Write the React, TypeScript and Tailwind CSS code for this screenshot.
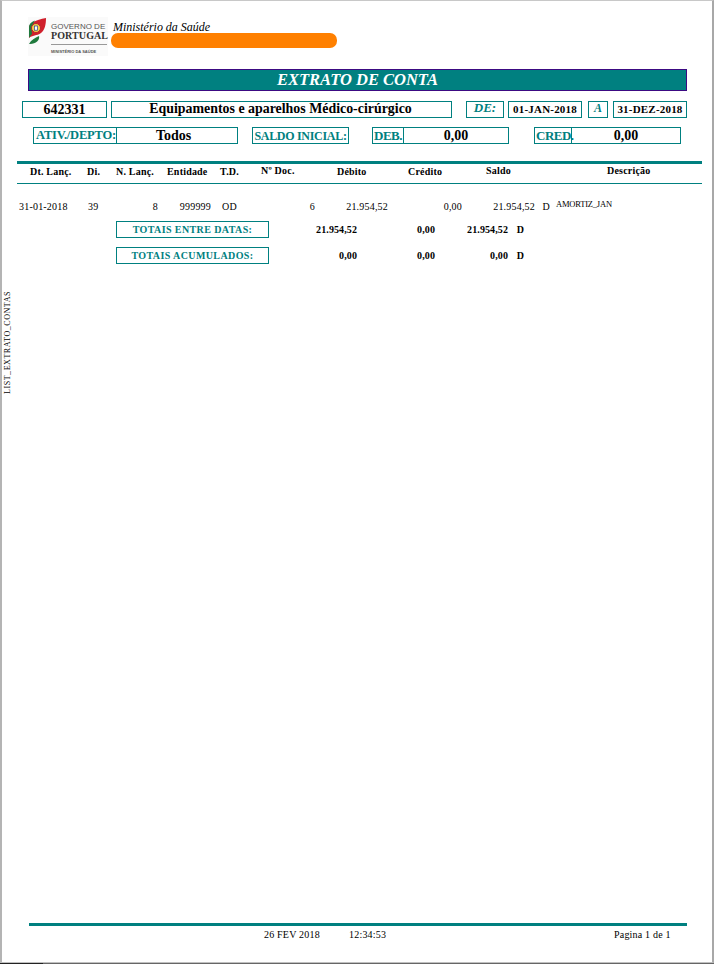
const serif = "font-['Liberation_Serif','Times_New_Roman',serif]";

const teal = "border border-[#008080]";

// row of a table: every cell has a fixed column box
const Cell = ({ w, right, center, className, children }: { w: number; right?: boolean; center?: boolean; className?: string; children?: React.ReactNode }) => (
  <div
    style={{ width: w }}
    className={`shrink-0 whitespace-nowrap ${right ? "text-right" : center ? "text-center" : "text-left"} ${className ?? ""}`}
  >
    {children}
  </div>
);

const Logo = () => (
  <div className="flex w-[80px] h-[39px] bg-[#fafafa]">
    <svg width="19" height="27" viewBox="0 0 19 27" className="shrink-0 mt-[1px]">
      <path d="M1 9 C2 5 7 2 18 0 C18 6 17 12 13 15 C9 18 4 17 1 20 Z" fill="#d0202c" />
      <path d="M1 9 C1 6 3 4 7 2.5 C4 6 3 11 4 16 C3 17 2 18 1 20 Z" fill="#1f7a3d" />
      <path d="M1 26 C3 22 7 20 11 18 C12 22 8 26 2 26 Z" fill="#1f7a3d" />
      <circle cx="8" cy="10" r="4.5" fill="#f4d24a" stroke="#b8202c" strokeWidth="1" />
      <rect x="6.4" y="8" width="3.2" height="4.2" fill="#ffffff" stroke="#23408f" strokeWidth="0.7" />
    </svg>
    <div className="ml-[4px] pt-[6px] font-['Liberation_Sans',sans-serif] text-[#555]">
      <div className="text-[8px] leading-[8px] whitespace-nowrap">GOVERNO DE</div>
      <div className="text-[10px] leading-[10px] font-bold tracking-[0.1px] font-['Liberation_Serif',serif] text-[#333] whitespace-nowrap">PORTUGAL</div>
      <div className="h-[1px] bg-[#999] mt-[3px] w-[56px]" />
      <div className="text-[4px] leading-[4px] mt-[5px] font-bold text-[#555] whitespace-nowrap">MINISTÉRIO DA SAÚDE</div>
    </div>
  </div>
);

const Box = ({ w, h, className, children }: { w: number; h: number; className?: string; children?: React.ReactNode }) => (
  <div style={{ width: w, height: h }} className={`${teal} shrink-0 flex items-center justify-center whitespace-nowrap ${className ?? ""}`}>
    {children}
  </div>
);

const columns = ["Dt. Lanç.", "Di.", "N. Lanç.", "Entidade", "T.D."];

export default function App() {
  return (
    <div className={`${serif} w-[714px] h-[964px] bg-white text-black overflow-hidden flex flex-col`}>
      <div className="relative flex-1 border-t border-t-[#c8c8c8] border-l-2 border-l-[#b4b4b4] border-r-2 border-r-[#a8a8a8] border-b border-b-[#c0c0c0]">
        {/* cabeçalho */}
        <div className="flex pt-[16px] pl-[26px]">
          <Logo />
          <div className="ml-[5px]">
            <div className="italic text-[13.3px] leading-[15px] mt-[2px] scale-x-90 origin-left whitespace-nowrap">Ministério da Saúde</div>
            <div className="w-[226px] h-[15px] rounded-[7px] bg-[#ff8000] -ml-[2px] mt-[-1px]" />
          </div>
        </div>

        <div className="ml-[26px] mt-[13px] w-[659px] h-[22px] bg-[#008080] border border-[#3c0a82] flex items-center justify-center text-white italic font-bold text-[16.5px] leading-none">
          EXTRATO DE CONTA
        </div>

        <div className="flex ml-[20px] mt-[10px] items-start">
          <Box w={85} h={17} className="font-bold text-[14px]">642331</Box>
          <Box w={341} h={17} className="ml-[4px] font-bold text-[13.9px] pr-[2px]">Equipamentos e aparelhos Médico-cirúrgico</Box>
          <Box w={38} h={17} className="ml-[14px] italic font-bold text-[#008080] text-[13px] pb-[4px]">DE:</Box>
          <Box w={74} h={17} className="ml-[4px] font-bold text-[11px] tracking-[0.2px]">01-JAN-2018</Box>
          <Box w={20} h={17} className="ml-[6px] italic font-bold text-[#008080] text-[12px] pb-[3px]">A</Box>
          <Box w={74} h={17} className="ml-[5px] font-bold text-[11px] tracking-[0.2px]">31-DEZ-2018</Box>
        </div>

        <div className="flex ml-[31px] mt-[9px] items-start">
          <Box w={84} h={17} className="text-[#008080] font-bold text-[12.5px] tracking-[-0.2px] justify-start pl-[2px]">ATIV./DEPTO:</Box>
          <Box w={122} h={17} className="-ml-[1px] font-bold text-[14px] justify-start pl-[39px]">Todos</Box>
          <Box w={97} h={17} className="ml-[14px] text-[#008080] font-bold text-[12px] tracking-[-0.3px]">SALDO INICIAL:</Box>
          <Box w={32} h={17} className="ml-[23px] text-[#008080] font-bold text-[13px] tracking-[-0.5px] justify-start pl-[1px]">DEB.</Box>
          <Box w={106} h={17} className="-ml-[1px] font-bold text-[14px]">0,00</Box>
          <Box w={38} h={17} className="ml-[25px] text-[#008080] font-bold text-[13px] tracking-[-0.5px] justify-start pl-[1px]">CRED.</Box>
          <Box w={110} h={17} className="-ml-[1px] font-bold text-[14px]">0,00</Box>
        </div>

        {/* tabela */}
        <div className="ml-[15px] mt-[17px] w-[685px] border-t-[3px] border-[#008080]" />
        <div className="ml-[15px] w-[685px] h-[20px] border-b border-[#008080] flex text-[10px] font-bold leading-[12px] pt-[2px] tracking-[0.2px]">
          <Cell w={13} />
          {columns.map((c, i) => (
            <Cell key={c} w={[57, 29, 51, 53, 41][i]}>{c}</Cell>
          ))}
          <Cell w={76} className="-mt-[1px]">Nº Doc.</Cell>
          <Cell w={71}>Débito</Cell>
          <Cell w={78}>Crédito</Cell>
          <Cell w={121} className="-mt-[1px]">Saldo</Cell>
          <Cell w={60} className="-mt-[1px]">Descrição</Cell>
        </div>

        <div className="ml-[15px] w-[685px] mt-[17px] flex text-[10px] leading-[12px] h-[12px] tracking-[0.2px]">
          <Cell w={2} />
          <Cell w={69}>31-01-2018</Cell>
          <Cell w={36}>39</Cell>
          <Cell w={34} right>8</Cell>
          <Cell w={53} right>999999</Cell>
          <Cell w={32} className="pl-[11px]">OD</Cell>
          <Cell w={72} right>6</Cell>
          <Cell w={73} right>21.954,52</Cell>
          <Cell w={74} right>0,00</Cell>
          <Cell w={73} right>21.954,52</Cell>
          <Cell w={15} right>D</Cell>
          <Cell w={70} className="pl-[6px] text-[8.5px] -mt-[3px] tracking-[-0.2px]">AMORTIZ_JAN</Cell>
        </div>

        <div className="ml-[114px] mt-[8px] flex items-center h-[17px] text-[10px] font-bold tracking-[0.1px]">
          <Box w={153} h={17} className="text-[#008080] tracking-[0.4px]">TOTAIS ENTRE DATAS:</Box>
          <Cell w={88} right>21.954,52</Cell>
          <Cell w={78} right>0,00</Cell>
          <Cell w={73} right>21.954,52</Cell>
          <Cell w={16} right>D</Cell>
        </div>

        <div className="ml-[114px] mt-[9px] flex items-center h-[17px] text-[10px] font-bold tracking-[0.1px]">
          <Box w={153} h={17} className="text-[#008080] tracking-[0.4px]">TOTAIS ACUMULADOS:</Box>
          <Cell w={88} right>0,00</Cell>
          <Cell w={78} right>0,00</Cell>
          <Cell w={73} right>0,00</Cell>
          <Cell w={16} right>D</Cell>
        </div>

        {/* etiqueta lateral */}
        <div className="absolute left-[1px] top-[289px] h-[105px] w-[10px] [writing-mode:vertical-rl] rotate-180 text-[8px] leading-[10px] tracking-[0.55px] whitespace-nowrap text-center">
          LIST_EXTRATO_CONTAS
        </div>

        {/* rodapé */}
        <div className="absolute left-[27px] bottom-[21px] w-[658px]">
          <div className="border-t-[3px] border-[#008080]" />
          <div className="flex text-[10px] leading-[12px] mt-[3px] tracking-[0.2px]">
            <Cell w={235} />
            <Cell w={85}>26 FEV 2018</Cell>
            <Cell w={265}>12:34:53</Cell>
            <Cell w={60}>Pagina 1 de 1</Cell>
          </div>
        </div>
      </div>
      <div className="flex h-[1px] shrink-0">
        <div className="w-[43px] bg-[#222]" />
        <div className="flex-1 bg-[#666]" />
      </div>
    </div>
  );
}
